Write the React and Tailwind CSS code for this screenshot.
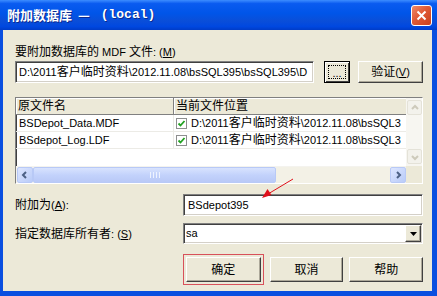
import React from "react";

const ui = "font-['Tahoma','Liberation_Sans','Noto_Sans_CJK_SC',sans-serif] text-[11px] text-black";

// classic 3d borders
const sunken =
  "bg-white border border-t-[#808080] border-l-[#808080] border-b-white border-r-white shadow-[inset_1px_1px_0_#404040,inset_-1px_-1px_0_#d4d0c8]";
const raised =
  "bg-[#ece9d8] border border-t-white border-l-white border-b-[#404040] border-r-[#404040] shadow-[inset_-1px_-1px_0_#aca899]";

function U({ children }) {
  return <span className="underline underline-offset-[1px]">{children}</span>;
}

// chinese text is a little larger than the latin text in this dialog
function C({ children }) {
  return <span className="text-[12px]">{children}</span>;
}

function Btn({ children, className = "" }) {
  return (
    <div className={`${raised} flex items-center justify-center ${className}`}>{children}</div>
  );
}

function Check() {
  return (
    <span className="w-[11px] h-[11px] shrink-0 bg-white border border-[#8e8f8f] flex items-center justify-center">
      <svg width="9" height="9" viewBox="0 0 9 9">
        <path d="M1.5 4.5 L3.5 6.5 L7.5 2" fill="none" stroke="#21a121" strokeWidth="1.8" />
      </svg>
    </span>
  );
}

function Chevron({ dir, color }) {
  const d = {
    left: "M6 2 L3 5 L6 8",
    right: "M4 2 L7 5 L4 8",
    up: "M2 6 L5 3 L8 6",
    down: "M2 4 L5 7 L8 4",
  }[dir];
  return (
    <svg width="10" height="10" viewBox="0 0 10 10">
      <path d={d} fill="none" stroke={color} strokeWidth="2" />
    </svg>
  );
}

function Row({ name }) {
  return (
    <div className="h-[17px] flex border-b border-[#ecebe6]">
      <div className="w-[158px] pl-[3px] flex items-center border-r border-[#ecebe6] whitespace-nowrap">{name}</div>
      <div className="flex-1 min-w-0 flex items-center gap-[4px] pl-[2px] overflow-hidden whitespace-nowrap">
        <Check />
        <span>D:\2011<C>客户临时资料</C>\2012.11.08\bsSQL3</span>
      </div>
    </div>
  );
}

export default function App() {
  return (
    <div className={`${ui} relative w-[437px] h-[296px] flex flex-col bg-[#0a4fe0] overflow-hidden`}>
      {/* title bar */}
      <div className="h-[30px] shrink-0 flex items-center pl-[7px] pr-[5px] bg-[linear-gradient(180deg,#3d8dff_0%,#0a5bf0_12%,#0055e8_45%,#0a4ed8_70%,#0048e0_88%,#003cc8_100%)]">
        <div className="flex-1 flex items-center font-bold text-white text-[13px] whitespace-pre [text-shadow:1px_1px_0_#0c2a8f]">
          <span className="font-['Noto_Sans_CJK_SC',sans-serif]">附加数据库  — </span>
          <span className="font-['Liberation_Mono',monospace] ml-[8px]">(local)</span>
        </div>
        <div className="w-[21px] h-[21px] rounded-[3px] border border-white bg-[linear-gradient(135deg,#ef8a6a_0%,#e05a36_45%,#c8401c_100%)] flex items-center justify-center">
          <svg width="11" height="11" viewBox="0 0 11 11">
            <path d="M1.5 1.5 L9.5 9.5 M9.5 1.5 L1.5 9.5" stroke="white" strokeWidth="2" />
          </svg>
        </div>
      </div>

      {/* body */}
      <div className="flex-1 ml-[3px] mr-[5px] mb-[5px] bg-[#ece9d8] flex flex-col pl-[12px] pr-[9px] pt-[15px]">
        <div className="h-[14px] leading-[14px] whitespace-nowrap">
          <C>要附加数据库的</C> MDF <C>文件</C>: (<U>M</U>)
        </div>

        <div className="mt-[2px] h-[22px] flex">
          <div className={`${sunken} flex-1 min-w-0 flex items-center pl-[3px] overflow-hidden whitespace-nowrap`}>
            D:\2011<C>客户临时资料</C>\2012.11.08\bsSQL395\bsSQL395\D
          </div>
          <div className="ml-[10px] w-[26px] h-[22px] shrink-0 border border-black bg-[#ece9d8] shadow-[inset_1px_1px_0_white,inset_-1px_-1px_0_#404040] flex items-center justify-center">
            <div className="w-[18px] h-[14px] border border-dotted border-black flex items-end justify-center leading-[10px]">...</div>
          </div>
          <Btn className="ml-[8px] w-[65px] shrink-0">
            <C>验证</C>(<U>V</U>)
          </Btn>
        </div>

        {/* list view */}
        <div className={`${sunken} mt-[14px] h-[87px] grid grid-cols-[1fr_16px] grid-rows-[1fr_17px] overflow-hidden`}>
          <div className="flex flex-col overflow-hidden min-w-0">
            <div className="h-[17px] flex shrink-0 bg-[#ece9d8] text-[12px]">
              <div className="w-[158px] pl-[2px] flex items-center border-r border-[#808080] border-b border-b-[#808080] shadow-[inset_1px_1px_0_white]">原文件名</div>
              <div className="flex-1 pl-[2px] flex items-center border-b border-[#808080] shadow-[inset_1px_1px_0_white]">当前文件位置</div>
            </div>
            <Row name="BSDepot_Data.MDF" />
            <Row name="BSdepot_Log.LDF" />
          </div>
          {/* vertical scrollbar (disabled) */}
          <div className="bg-[#f7f6f1] flex flex-col justify-between py-[2px] pl-[1px]">
            <div className="w-[15px] h-[15px] rounded-[2px] border border-[#e4e2d8] bg-[#f3f2ec] flex items-center justify-center">
              <Chevron dir="up" color="#cdcabb" />
            </div>
            <div className="w-[15px] h-[15px] rounded-[2px] border border-[#e4e2d8] bg-[#f3f2ec] flex items-center justify-center">
              <Chevron dir="down" color="#cdcabb" />
            </div>
          </div>
          {/* horizontal scrollbar */}
          <div className="flex items-center bg-[#f4f3ee] pl-[1px]">
            <div className="w-[16px] h-[16px] rounded-[2px] border border-[#b8c9f6] bg-[linear-gradient(135deg,#dde6ff,#b9cbf8)] flex items-center justify-center">
              <Chevron dir="left" color="#4d6185" />
            </div>
            <div className="w-[243px] h-[16px] rounded-[2px] border border-[#b8c9f6] bg-[linear-gradient(180deg,#d8e3fe,#c3d2fb_50%,#b9c9f7)] flex items-center justify-center gap-[2px]">
              <span className="w-px h-[6px] bg-[#eef3ff]" />
              <span className="w-px h-[6px] bg-[#eef3ff]" />
              <span className="w-px h-[6px] bg-[#eef3ff]" />
              <span className="w-px h-[6px] bg-[#eef3ff]" />
            </div>
            <div className="flex-1 h-[16px] bg-[#f3f1e6]" />
            <div className="w-[16px] h-[16px] rounded-[2px] border border-[#b8c9f6] bg-[linear-gradient(135deg,#dde6ff,#b9cbf8)] flex items-center justify-center">
              <Chevron dir="right" color="#4d6185" />
            </div>
          </div>
          <div className="bg-[#ece9d8]" />
        </div>

        <div className="mt-[10px] h-[22px] flex items-center">
          <div className="w-[168px] whitespace-nowrap">
            <C>附加为</C>(<U>A</U>):
          </div>
          <div className={`${sunken} flex-1 h-[22px] flex items-center pl-[4px]`}>BSdepot395</div>
        </div>

        <div className="mt-[7px] h-[21px] flex items-center">
          <div className="w-[168px] whitespace-nowrap">
            <C>指定数据库所有者</C>: (<U>S</U>)
          </div>
          <div className={`${sunken} flex-1 h-[21px] flex items-center`}>
            <span className="flex-1 pl-[2px]">sa</span>
            <div className={`${raised} w-[16px] h-[17px] mr-[1px] flex items-center justify-center`}>
              <svg width="7" height="4" viewBox="0 0 7 4">
                <path d="M0 0 H7 L3.5 4 Z" fill="black" />
              </svg>
            </div>
          </div>
        </div>

        <div className="mt-[13px] h-[25px] flex pl-[171px] text-[12px]">
          <Btn className="w-[75px] outline outline-[1.5px] outline-[#d8515a] outline-offset-[2px]">确定</Btn>
          <Btn className="ml-[9px] w-[74px]">取消</Btn>
          <Btn className="ml-[6px] w-[74px]">帮助</Btn>
        </div>
      </div>

      {/* red annotation arrow */}
      <svg className="absolute left-0 top-0 pointer-events-none" width="437" height="296">
        <line x1="293" y1="179" x2="268" y2="194" stroke="#e0101a" strokeWidth="1" />
        <polygon points="262,198 271.5,195 267.5,189" fill="#e0101a" />
      </svg>
    </div>
  );
}
